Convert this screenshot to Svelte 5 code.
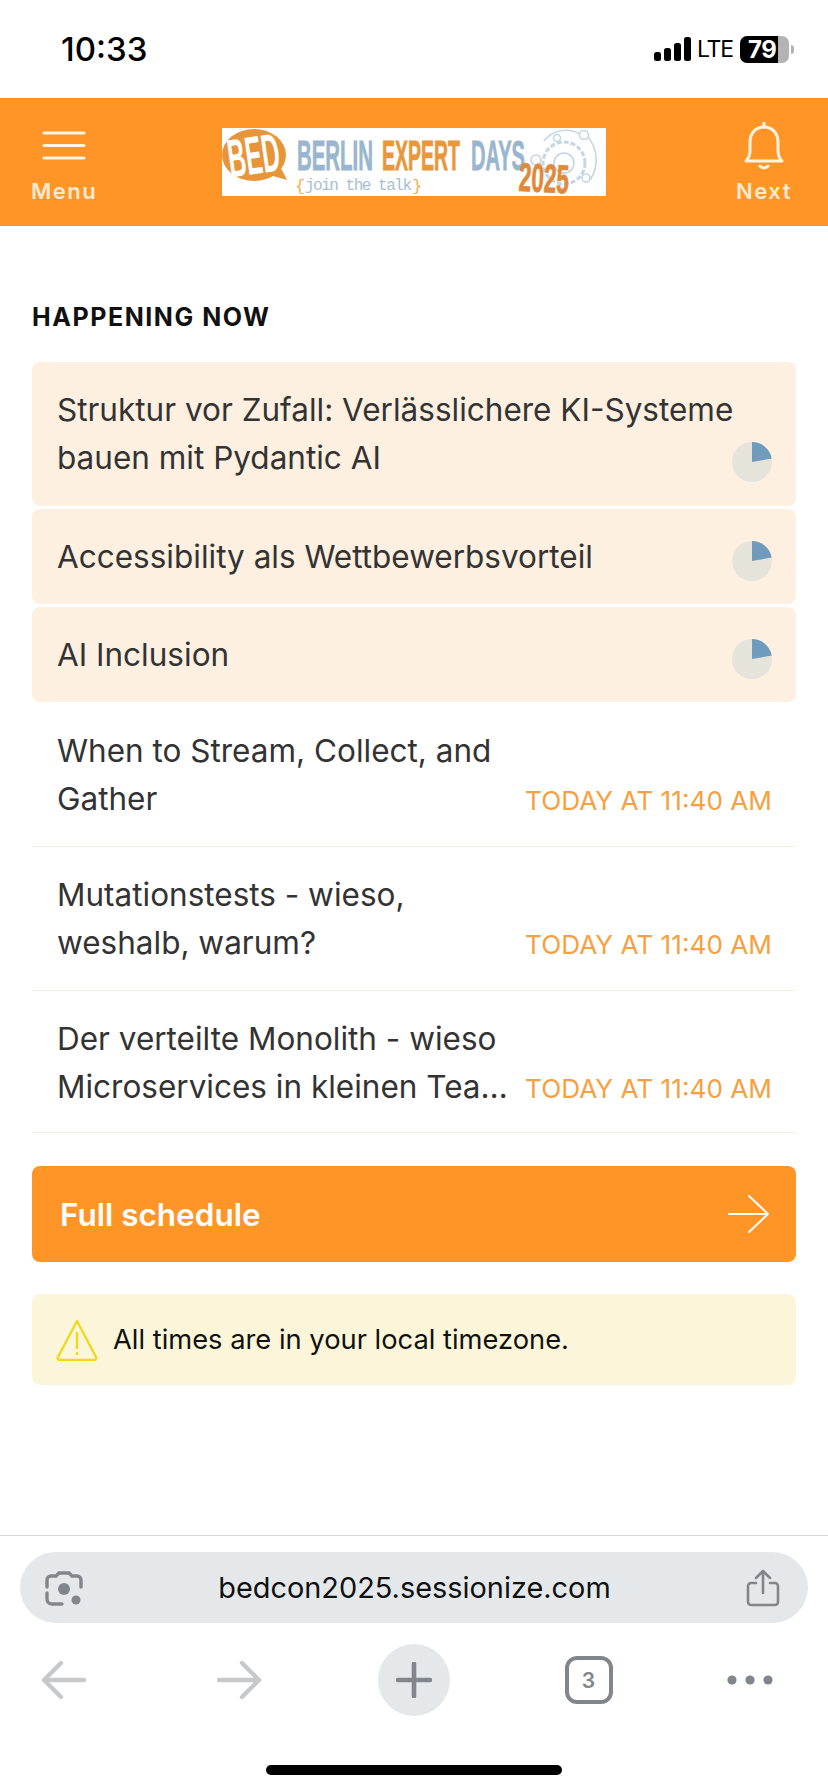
<script>
  const live = [
    'Struktur vor Zufall: Verlässlichere KI-Systeme bauen mit Pydantic AI',
    'Accessibility als Wettbewerbsvorteil',
    'AI Inclusion'
  ];
  const upcoming = [
    'When to Stream, Collect, and Gather',
    'Mutationstests - wieso, weshalb, warum?',
    'Der verteilte Monolith - wieso Microservices in kleinen Tea…'
  ];
</script>

<div class="page">
  <div class="status">
    <span class="clock">10:33</span>
    <div class="status-right">
      <svg width="37" height="24" viewBox="0 0 37 24">
        <rect x="0" y="15" width="7" height="9" rx="2.5" fill="#000" />
        <rect x="10" y="11" width="7" height="13" rx="2.5" fill="#000" />
        <rect x="20" y="6" width="7" height="18" rx="2.5" fill="#000" />
        <rect x="30" y="0" width="7" height="24" rx="2.5" fill="#000" />
      </svg>
      <span class="lte">LTE</span>
      <div class="battery"><span>79</span></div>
      <i class="nub"></i>
    </div>
  </div>

  <header>
    <div class="hbtn">
      <svg class="burger" width="44" height="29" viewBox="0 0 44 29" fill="none" stroke="#fff3e2" stroke-width="3" stroke-linecap="round">
        <path d="M2 2h40M2 14.5h40M2 27h40" />
      </svg>
      <span>Menu</span>
    </div>
    <div class="logo">
      <svg width="384" height="68" viewBox="0 0 384 68">
        <rect width="384" height="68" fill="#fff" />
        <ellipse cx="32" cy="27" rx="32" ry="26" fill="#e8953a" />
        <path d="M44 46 L65 52 L56 34 Z" fill="#e8953a" />
        <text x="6" y="46" class="cond" font-size="54" fill="#fff" textLength="52" lengthAdjust="spacingAndGlyphs" transform="rotate(-8 32 30)">BED</text>
        <text x="75" y="42" class="cond heavy blue" font-size="42" textLength="76" lengthAdjust="spacingAndGlyphs">BERLIN</text>
        <text x="160" y="42" class="cond heavy amber" font-size="42" textLength="78" lengthAdjust="spacingAndGlyphs">EXPERT</text>
        <text x="249" y="42" class="cond heavy blue" font-size="42" textLength="54" lengthAdjust="spacingAndGlyphs">DAYS</text>
        <text x="73" y="63" class="mono" font-size="17" fill="#f0b050">&#123;</text>
        <text x="83" y="62" class="mono" font-size="16" fill="#a9c0d4" textLength="107" lengthAdjust="spacing">join the talk</text>
        <text x="190" y="63" class="mono" font-size="17" fill="#f0b050">&#125;</text>
        <g fill="none" stroke="#c6d6e3" stroke-width="1.6">
          <circle cx="342" cy="35" r="21" stroke-dasharray="5 2" stroke-width="3" />
          <circle cx="342" cy="35" r="10" />
          <path d="M366 9 A36 36 0 0 1 368 52" />
          <path d="M322 13 A28 28 0 0 1 358 6" />
          <circle cx="362" cy="7" r="4.5" />
          <circle cx="335" cy="10" r="3.5" />
          <circle cx="364" cy="50" r="4" />
          <circle cx="314" cy="32" r="5" />
        </g>
        <text x="297" y="64" class="cond heavy amber2" font-size="40" textLength="50" lengthAdjust="spacingAndGlyphs" transform="rotate(3 320 50)">2025</text>
      </svg>
    </div>
    <div class="hbtn">
      <svg class="bell" width="40" height="48" viewBox="0 0 40 48" fill="none" stroke="#fff3e2" stroke-width="3" stroke-linejoin="round" stroke-linecap="round">
        <path d="M20 1v4" />
        <path d="M2 39c3-3 4-6 4-11V20C6 11 12 5 20 5s14 6 14 15v8c0 5 1 8 4 11z" />
        <path d="M16 44c2 2.500 6 2.500 8 0" />
      </svg>
      <span>Next</span>
    </div>
  </header>

  <main>
    <h2>HAPPENING NOW</h2>

    <div class="list">
      {#each live as title}
        <div class="card">
          <span class="title live">{title}</span>
          <svg class="pie" width="40" height="40" viewBox="-20 -20 40 40">
            <circle r="20" fill="#e6e3da" />
            <path d="M0 0V-20A20 20 0 0 1 19.7 -3.4Z" fill="#6f9cbc" />
          </svg>
        </div>
      {/each}
      {#each upcoming as title}
        <div class="row">
          <span class="title">{title}</span>
          <span class="when">TODAY AT 11:40 AM</span>
        </div>
      {/each}
    </div>

    <div class="cta">
      <span>Full schedule</span>
      <svg width="42" height="38" viewBox="0 0 42 38" fill="none" stroke="#fff" stroke-width="2" stroke-linecap="round" stroke-linejoin="round">
        <path d="M1 19h39M21 1l19 18-19 18" />
      </svg>
    </div>

    <div class="notice">
      <svg width="42" height="42" viewBox="0 0 42 42" fill="none" stroke="#efd81e" stroke-width="2.4" stroke-linejoin="round" stroke-linecap="round">
        <path d="M21 2L40 38a2 2 0 0 1-2 3H4a2 2 0 0 1-2-3z" />
        <path d="M21 14v15M21 34v1" />
      </svg>
      <span>All times are in your local timezone.</span>
    </div>
  </main>

  <div class="chrome">
    <div class="url">
      <svg width="38" height="38" viewBox="0 0 38 38" fill="none" stroke="#80868b" stroke-width="3.4" stroke-linecap="round">
        <path d="M2 18v-7a4 4 0 0 1 4-4h5l3-3h10l3 3h5a4 4 0 0 1 4 4v7" />
        <path d="M2 24v6a5 5 0 0 0 5 5h10" />
        <circle cx="19" cy="20" r="6" fill="#80868b" stroke="none" />
        <circle cx="31" cy="31" r="4.5" fill="#80868b" stroke="none" />
      </svg>
      <span>bedcon2025.sessionize.com</span>
      <svg width="34" height="38" viewBox="0 0 34 38" fill="none" stroke="#80868b" stroke-width="2.6" stroke-linecap="round" stroke-linejoin="round">
        <path d="M10 14H5a3 3 0 0 0-3 3v16a3 3 0 0 0 3 3h24a3 3 0 0 0 3-3V17a3 3 0 0 0-3-3h-5" />
        <path d="M17 24V2M10 9l7-7 7 7" />
      </svg>
    </div>
    <nav>
      <svg width="46" height="38" viewBox="0 0 46 38" fill="none" stroke="#c6c8ca" stroke-width="4.4" stroke-linecap="round" stroke-linejoin="round">
        <path d="M43 19H3M20 2L3 19l17 17" />
      </svg>
      <svg width="46" height="38" viewBox="0 0 46 38" fill="none" stroke="#c6c8ca" stroke-width="4.4" stroke-linecap="round" stroke-linejoin="round">
        <path d="M3 19h40M26 2l17 17-17 17" />
      </svg>
      <div class="plus">
        <svg width="36" height="36" viewBox="0 0 36 36" fill="none" stroke="#80868b" stroke-width="4.6" stroke-linecap="round">
          <path d="M2 18h32M18 2v32" />
        </svg>
      </div>
      <div class="tabs">3</div>
      <svg width="46" height="10" viewBox="0 0 46 10" fill="#80868b">
        <circle cx="5" cy="5" r="4.6" /><circle cx="23" cy="5" r="4.6" /><circle cx="41" cy="5" r="4.6" />
      </svg>
    </nav>
    <div class="home"></div>
  </div>
</div>

<style>
  :global(body) { margin: 0; background: #fff; }
  .page {
    width: 828px; height: 1792px; display: flex; flex-direction: column;
    font-family: Inter, "Liberation Sans", sans-serif; overflow: hidden; background: #fff;
  }

  .status { height: 98px; flex: none; display: flex; justify-content: space-between; align-items: center; padding: 0 34px 0 61px; box-sizing: border-box; }
  .clock { font-size: 33px; font-weight: 500; color: #000; }
  .status-right { display: flex; align-items: center; }
  .lte { font-size: 23px; color: #000; margin: 0 8px 0 6px; letter-spacing: -1.2px; width: 35px; white-space: nowrap; }
  .battery {
    width: 49px; height: 27px; border-radius: 7px; box-sizing: border-box; padding-left: 8px; display: flex; align-items: center;
    background: linear-gradient(90deg, #000 0 78%, #b4b4b4 78%);
    color: #fff; font-size: 24px; font-weight: 700; letter-spacing: -0.5px;
  }
  .nub { width: 3px; height: 9px; background: #b4b4b4; border-radius: 0 3px 3px 0; margin-left: 2px; }

  header { height: 128px; flex: none; background: #ff9427; display: grid; grid-template-columns: 128px 1fr 128px; align-items: center; }
  .hbtn { display: flex; flex-direction: column; align-items: center; justify-content: flex-end; height: 128px; padding-bottom: 21px; box-sizing: border-box; }
  .hbtn span { font-size: 22px; font-weight: 600; letter-spacing: 1.5px; color: #fdeacf; line-height: 28px; }
  .burger { margin-bottom: 17px; }
  .bell { margin-bottom: 7px; }
  .logo { display: flex; justify-content: center; }
  .logo svg { display: block; }
  .cond { font-family: "Liberation Sans", sans-serif; font-weight: 700; }
  .heavy { stroke-width: 0.8px; }
  .blue { fill: #9ab6cf; stroke: #9ab6cf; }
  .amber { fill: #e8973a; stroke: #e8973a; }
  .amber2 { fill: #e0893a; stroke: #e0893a; }
  .mono { font-family: "Liberation Mono", monospace; }

  main { flex: 1; padding: 0 32px; }
  h2 { margin: 76px 0 30px; font-size: 25px; line-height: 30px; font-weight: 700; letter-spacing: 1.55px; color: #111; }

  .list { display: flex; flex-direction: column; }
  .card {
    background: #fdf0e1; border-radius: 8px; margin-bottom: 3px; padding: 24px 24px 23px 25px;
    display: flex; justify-content: space-between; align-items: flex-end;
  }
  .card:first-child { padding-bottom: 24px; }
  .card:nth-child(3) { margin-bottom: 0; }
  .title { font-size: 31.5px; line-height: 48px; color: #333; width: 460px; flex: none; }
  .title.live { flex: 1; width: auto; }
  /* long titles run above the pie on the line before it */
  .pie { flex: none; margin-left: -40px; }
  .row {
    border-bottom: 1px solid #f6efdd; padding: 24px 24px 23px 25px;
    display: flex; justify-content: space-between; align-items: flex-end;
  }
  .card + .row { padding-top: 25px; }
  .row:last-child { padding-bottom: 21px; }
  .when { font-size: 26.2px; line-height: 48px; color: #f7a03f; white-space: nowrap; margin-bottom: -2px; }

  .cta {
    margin-top: 33px; height: 96px; background: #ff9427; border-radius: 8px; padding: 0 26px 0 28px;
    display: flex; justify-content: space-between; align-items: center;
    color: #fff; font-size: 31.5px; font-weight: 600;
  }
  .notice {
    margin-top: 32px; height: 91px; background: #fbf6da; border-radius: 8px; padding: 0 24px;
    display: flex; align-items: center; gap: 15px; color: #111; font-size: 27.3px;
  }

  .chrome { flex: none; height: 257px; border-top: 1px solid #d8d8d8; box-sizing: border-box; display: flex; flex-direction: column; align-items: center; }
  .url {
    margin-top: 16px; width: 788px; height: 71px; border-radius: 36px; background: #e5e8eb; box-sizing: border-box; padding: 0 28px 0 25px;
    display: flex; justify-content: space-between; align-items: center;
    font-size: 28.9px; color: #111;
  }
  nav {
    margin: 21px 0 0 -24px; width: 852px; height: 72px; padding-right: 5px; box-sizing: border-box;
    display: grid; grid-template-columns: repeat(4, 175px) 1fr; justify-items: center; align-items: center;
  }
  .plus { width: 72px; height: 72px; border-radius: 50%; background: #e5e8eb; display: flex; align-items: center; justify-content: center; }
  .tabs {
    width: 48px; height: 48px; box-sizing: border-box; border: 4.5px solid #80868b; border-radius: 12px;
    display: flex; align-items: center; justify-content: center; color: #80868b; font-size: 21px; font-weight: 600;
  }
  .home { margin-top: 49px; width: 296px; height: 10px; border-radius: 5px; background: #000; }
</style>
